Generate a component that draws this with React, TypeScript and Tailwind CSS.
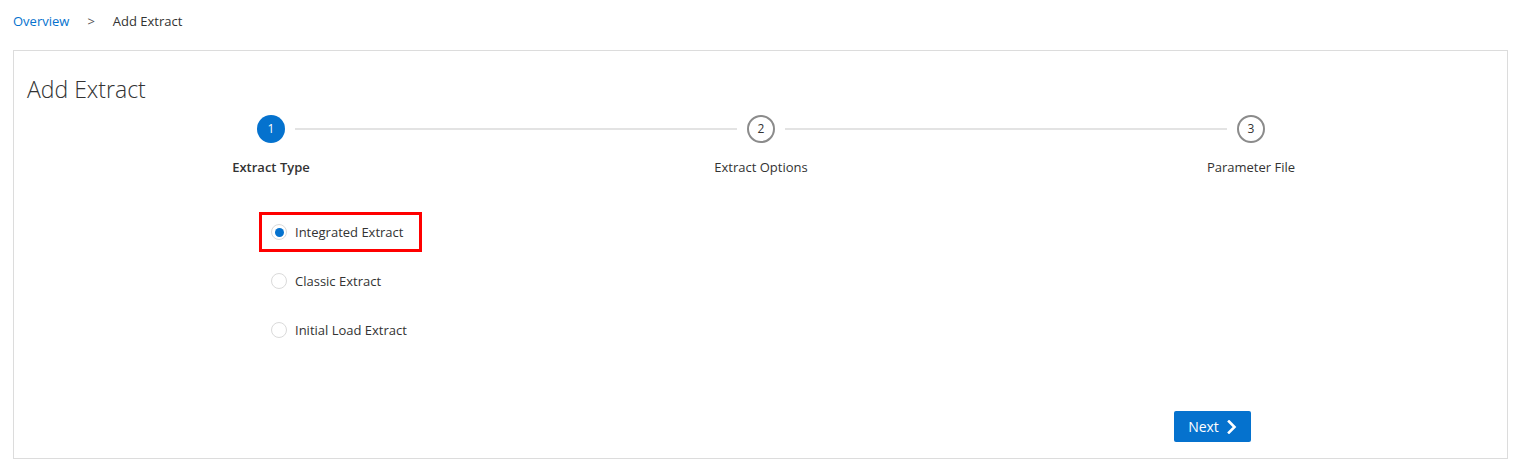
import React from "react";

const font = { fontFamily: '"Open Sans", "Noto Sans", Arial, sans-serif' };

function Step({ n, label, active, first, last }: { n: number; label: string; active?: boolean; first?: boolean; last?: boolean }) {
  return (
    <div className="flex flex-col items-center w-[490px]">
      <div className="flex items-center w-full h-[28px]">
        <div className={"flex-1 h-[2px] mr-[10px] " + (first ? "bg-transparent" : "bg-[#e3e3e3]")} />
        {active ? (
          <div className="w-[28px] h-[28px] rounded-full bg-[#0572ce] text-white text-[12px] flex items-center justify-center">{n}</div>
        ) : (
          <div className="w-[28px] h-[28px] rounded-full border-2 border-[#8b8b8b] bg-white text-[#333] text-[12px] flex items-center justify-center">{n}</div>
        )}
        <div className={"flex-1 h-[2px] ml-[10px] " + (last ? "bg-transparent" : "bg-[#e3e3e3]")} />
      </div>
      <div className={"mt-[15px] text-[13px] leading-[18px] text-[#333] " + (active ? "font-semibold" : "")}>{label}</div>
    </div>
  );
}

function Radio({ label, checked, highlight }: { label: string; checked?: boolean; highlight?: boolean }) {
  return (
    <div className={"flex items-center h-[40px] w-fit pl-[9px] pr-[16px] border-[3px] " + (highlight ? "border-[#ff0000]" : "border-transparent")}>
      <div className="w-[16px] h-[16px] rounded-full border border-[#dadada] bg-white flex items-center justify-center">
        {checked && <div className="w-[9px] h-[9px] rounded-full bg-[#0572ce]" />}
      </div>
      <span className="ml-[8px] text-[13px] leading-[18px] text-[#333]">{label}</span>
    </div>
  );
}

export default function App() {
  return (
    <div className="w-full h-[470px] bg-white" style={font}>
      <div className="flex items-center pl-[13px] pt-[12px] h-[50px] items-start text-[13px] leading-[18px]">
        <span className="text-[#0572ce]">Overview</span>
        <span className="ml-[18px] text-[#555]">&gt;</span>
        <span className="ml-[18px] text-[#333]">Add Extract</span>
      </div>
      <div className="ml-[13px] mr-[12px] h-[409px] border border-[#dcdcdc] flex flex-col">
        <div className="pl-[13px] pt-[22px] text-[23px] leading-[32px] text-[#333] font-light">Add Extract</div>
        <div className="flex pl-[12px] mt-[10px]">
          <Step n={1} label="Extract Type" active first />
          <Step n={2} label="Extract Options" />
          <Step n={3} label="Parameter File" last />
        </div>
        <div className="flex flex-col gap-[9px] pl-[245px] mt-[36px]">
          <Radio label="Integrated Extract" checked highlight />
          <Radio label="Classic Extract" />
          <Radio label="Initial Load Extract" />
        </div>
        <div className="mt-auto mb-[16px] flex justify-end pr-[256px]">
          <button className="h-[31px] w-[77px] rounded-[2px] bg-[#0572ce] text-white text-[14px] flex items-center justify-center gap-[8px]">
            <span>Next</span>
            <svg width="10" height="14" viewBox="0 0 10 14">
              <path d="M2 1.5 L7.5 7 L2 12.5" stroke="white" strokeWidth="2.6" fill="none" strokeLinecap="square" />
            </svg>
          </button>
        </div>
      </div>
    </div>
  );
}
